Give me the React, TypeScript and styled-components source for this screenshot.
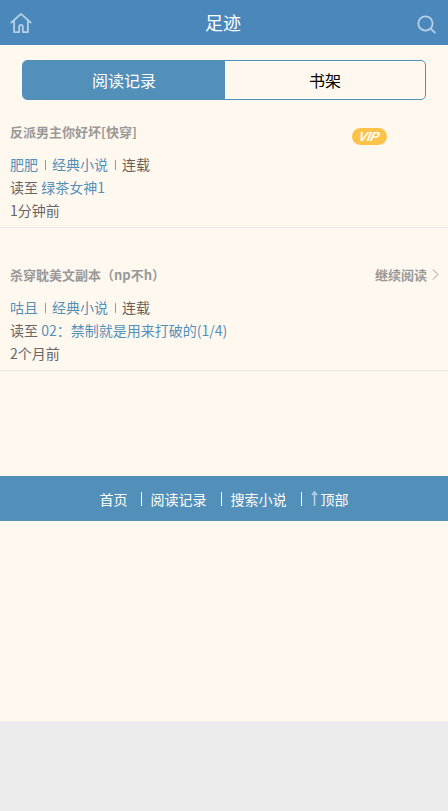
import * as React from 'react';
import styled, { createGlobalStyle } from 'styled-components';

const GlobalStyle = createGlobalStyle`
	html, body {
		margin: 0;
		padding: 0;
		background: #ececec;
	}
	body {
		font-family: "Noto Sans CJK SC", "Noto Sans", sans-serif;
		font-size: 14px;
	}
	a {
		text-decoration: none;
	}
`;

const Page = styled.div`
	width: 448px;
	height: 721px;
	background: #fff8ef;
	overflow: hidden;
`;

const Header = styled.header`
	display: flex;
	align-items: center;
	justify-content: space-between;
	height: 45px;
	padding: 0 12px 0 10px;
	box-sizing: border-box;
	background: #4a87ba;
`;

const HeaderTitle = styled.h1`
	margin: 0;
	color: #fff;
	font-size: 18px;
	font-weight: 400;
	line-height: 45px;
`;

const HeaderIcon = styled.svg`
	display: block;
	width: 22px;
	height: 22px;
	fill: none;
	stroke: #b5cfe4;
	stroke-width: 2;
	stroke-linecap: round;
	stroke-linejoin: round;
`;

const Tabs = styled.div`
	display: flex;
	height: 40px;
	margin: 15px 22px 0;
	box-sizing: border-box;
	border: 1px solid #5390b9;
	border-radius: 5px;
	overflow: hidden;
`;

const Tab = styled.a<{ $active?: boolean }>`
	flex: ${(p) => (p.$active ? '0 0 202px' : '1')};
	display: flex;
	align-items: center;
	justify-content: center;
	font-size: 16px;
	color: ${(p) => (p.$active ? '#fff' : '#000')};
	background: ${(p) => (p.$active ? '#5390b9' : 'transparent')};
`;

const List = styled.div`
	display: flex;
	flex-direction: column;
`;

const Item = styled.div<{ $first?: boolean }>`
	padding: ${(p) => (p.$first ? '20px' : '35px')} 9px 6px 10px;
	border-bottom: 1px solid #ebe9e6;
`;

const TitleRow = styled.div`
	position: relative;
	display: flex;
	align-items: center;
	justify-content: space-between;
	height: 22px;
	margin-bottom: 10px;
`;

const BookTitle = styled.a`
	color: #999;
	font-size: 13px;
	font-weight: 700;
`;

const VipBadge = styled.span`
	position: absolute;
	left: 342px;
	top: 8px;
	display: flex;
	align-items: center;
	justify-content: center;
	width: 35px;
	height: 17px;
	border-radius: 9px;
	background: #fdc24a;
`;

const VipText = styled.span`
	display: block;
	color: #fff;
	font-family: "Liberation Sans", sans-serif;
	font-size: 13px;
	font-weight: 700;
	letter-spacing: -0.2px;
	transform: skewX(-22deg);
`;

const ContinueLink = styled.a`
	display: flex;
	align-items: center;
	gap: 5px;
	color: #999;
	font-size: 13px;
	font-weight: 700;
`;

const Chevron = styled.svg`
	width: 7px;
	height: 11px;
	fill: none;
	stroke: #999;
	stroke-width: 1;
`;

const Line = styled.div`
	display: flex;
	align-items: center;
	height: 23px;
	color: #666;
	font-size: 14px;
	white-space: pre;
`;

const BlueLink = styled.a`
	color: #5390b9;
`;

const Status = styled.span`
	color: #6a5f55;
`;

const MetaBar = styled.i`
	display: inline-block;
	width: 1px;
	height: 10px;
	margin: 2px 6px 0 7px;
	background: #999;
`;

const Footer = styled.nav`
	display: flex;
	align-items: center;
	justify-content: center;
	height: 45px;
	margin-top: 105px;
	background: #5390b9;
`;

const FooterLink = styled.a<{ $first?: boolean }>`
	display: flex;
	align-items: center;
	height: 14px;
	padding: 0 ${(p) => (p.$first ? '13px' : '14px')} 0 ${(p) => (p.$first ? '0' : '9px')};
	border-right: 1px solid #fff;
	color: #fff;
	font-size: 14px;
	line-height: 14px;
`;

const LastLink = styled.a`
	display: flex;
	align-items: center;
	height: 14px;
	padding-left: 9px;
	color: #fff;
	font-size: 14px;
`;

const UpArrow = styled.svg`
	width: 7px;
	height: 15px;
	margin-right: 3px;
	fill: none;
	stroke: #b5cfe4;
	stroke-width: 1.6;
`;

const books = [
	{
		title: '反派男主你好坏[快穿]',
		author: '肥肥',
		chapter: '绿茶女神1',
		time: '1分钟前',
		vip: true,
	},
	{
		title: '杀穿耽美文副本（np不h）',
		author: '咕且',
		chapter: '02：禁制就是用来打破的(1/4)',
		time: '2个月前',
		vip: false,
	},
];

const App: React.FC = () => (
	<Page>
		<GlobalStyle />
		<Header>
			<a>
				<HeaderIcon viewBox="0 0 24 24">
					<path d="M1.5 11.5 12 2l10.5 9.5" />
					<path d="M4.5 9.5V22h5.5v-6a2 2 0 0 1 4 0v6h5.5V9.5" />
				</HeaderIcon>
			</a>
			<HeaderTitle>足迹</HeaderTitle>
			<a>
				<HeaderIcon viewBox="0 0 24 24">
					<circle cx="12.5" cy="12.5" r="7.8" />
					<path d="m18.2 18.2 4.4 4.2" />
				</HeaderIcon>
			</a>
		</Header>
		<Tabs>
			<Tab $active>阅读记录</Tab>
			<Tab>书架</Tab>
		</Tabs>
		<List>
			{books.map((book, i) => (
				<Item key={book.title} $first={i === 0}>
					<TitleRow>
						<BookTitle>{book.title}</BookTitle>
						{book.vip ? (
							<VipBadge>
								<VipText>VIP</VipText>
							</VipBadge>
						) : (
							<ContinueLink>
								继续阅读
								<Chevron viewBox="0 0 7 11">
									<path d="m1 .5 5 5-5 5" />
								</Chevron>
							</ContinueLink>
						)}
					</TitleRow>
					<Line>
						<BlueLink>{book.author}</BlueLink>
						<MetaBar />
						<BlueLink>经典小说</BlueLink>
						<MetaBar />
						<Status>连载</Status>
					</Line>
					<Line>
						读至 <BlueLink>{book.chapter}</BlueLink>
					</Line>
					<Line>{book.time}</Line>
				</Item>
			))}
		</List>
		<Footer>
			<FooterLink $first>首页</FooterLink>
			<FooterLink>阅读记录</FooterLink>
			<FooterLink>搜索小说</FooterLink>
			<LastLink>
				<UpArrow viewBox="0 0 7 15">
					<path d="M3.5 15V1M1 4l2.5-3L6 4" />
				</UpArrow>
				顶部
			</LastLink>
		</Footer>
	</Page>
);

export default App;
